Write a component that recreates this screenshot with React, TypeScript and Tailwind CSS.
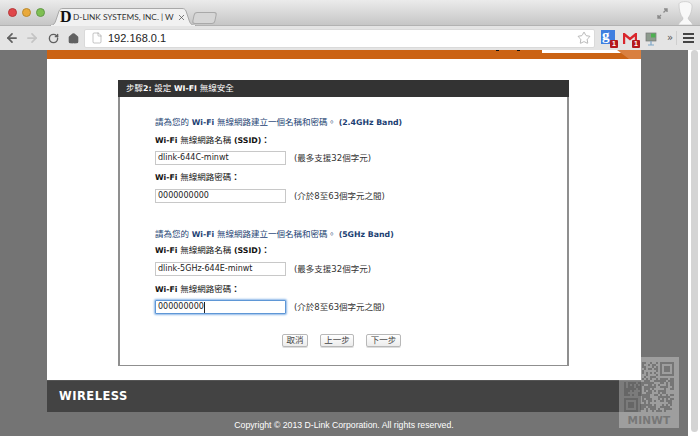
import { ArrowLeft, ArrowRight, RotateCw, Home, File, Star, X } from "lucide-react";

const CJK = "font-['DejaVu_Sans','Noto_Sans_CJK_TC',sans-serif]";

function Lights() {
  return (
    <div className="flex gap-[5px] pl-2 pt-2">
      <span className="w-[9px] h-[9px] rounded-full bg-[#e0474a] border border-[#b53a3a]" />
      <span className="w-[9px] h-[9px] rounded-full bg-[#e9a93a] border border-[#b98a30]" />
      <span className="w-[9px] h-[9px] rounded-full bg-[#7fbf52] border border-[#63994a]" />
    </div>
  );
}

function TabShape() {
  return (
    <svg width="146" height="18" className="absolute left-0 top-0" viewBox="0 0 146 18">
      <path d="M0 17.5 C4 17.5 5 15 6 12 L9 3 C10 1 11 .5 13 .5 L132 .5 C134 .5 135 1 136 3 L139 12 C140 15 141 17.5 146 17.5 Z" fill="#f1f1f1" stroke="#a8a8a8" />
      <rect x="1" y="17" width="144" height="1" fill="#f1f1f1" />
    </svg>
  );
}

function TabBar() {
  return (
    <div className="h-[25px] flex bg-gradient-to-b from-[#ebebeb] to-[#c6c6c6] relative">
      <Lights />
      <div className="relative w-[146px] h-[18px] mt-[8px] ml-[5px]">
        <TabShape />
        <div className="relative flex items-center h-[18px] pl-[10px]">
          <span className="font-['Liberation_Serif',serif] font-bold text-[16px] leading-none text-[#111] w-[12px]">D</span>
          <span className="font-['Lato','Liberation_Sans',sans-serif] text-[8.3px] text-[#333] w-[101px] ml-[1px] whitespace-nowrap">D-LINK SYSTEMS, INC. | W</span>
          <X size={9} strokeWidth={2} className="ml-[3px] text-[#555]" />
        </div>
      </div>
      <div className="w-[23px] h-[12px] mt-[12px] -ml-[3px] rounded-[3px] border border-[#a9a9a9] bg-[#d6d6d6] -skew-x-12" />
      <div className="ml-auto flex items-center gap-[10px] pr-[7px]">
        <svg width="11" height="11" viewBox="0 0 11 11" className="mt-[1px]">
          <path d="M1 10 L4 7 M6.5 4.5 L10 1 M7 1 H10 V4 M1 7 V10 H4" stroke="#8a8a8a" strokeWidth="1.4" fill="none" />
        </svg>
        <svg width="15" height="25" viewBox="0 0 15 25">
          <path d="M1 4 C1 1 14 0 14 6 C14 11 12 16 10 18 C11 21 13 21 15 25 L0 25 C2 21 5 21 5 18 C2 15 1 9 1 4Z" fill="#f8f8f8" stroke="#bdbdbd" strokeWidth=".6" />
        </svg>
      </div>
    </div>
  );
}

function Badge({ className = "" }: { className?: string }) {
  return (
    <span className={`absolute flex items-center justify-center w-[8px] h-[8px] rounded-[1px] bg-[#b5181d] text-white font-['Liberation_Sans',sans-serif] font-bold text-[7px] leading-none ${className}`}>1</span>
  );
}

function Toolbar() {
  return (
    <div className="h-[25px] bg-[#e4e4e4] border-t border-[#b2b2b2] flex items-center">
      <div className="flex items-center w-[84px] pl-[5px]">
        <ArrowLeft size={14} strokeWidth={3} className="text-[#606060]" />
        <ArrowRight size={14} strokeWidth={3} className="text-[#c4c4c4] ml-[6px]" />
        <RotateCw size={11} strokeWidth={3} className="text-[#606060] ml-[9px]" />
        <Home size={11} strokeWidth={3} fill="#606060" className="text-[#606060] ml-[9px]" />
      </div>
      <div className="w-[511px] h-[19px] bg-white rounded-[2px] flex items-center pl-[4px] pr-[3px] border border-[#dadada]">
        <File size={12} strokeWidth={1} className="text-[#888] ml-[2px]" />
        <span className="pl-[5px] font-['Liberation_Sans',sans-serif] text-[11px] text-[#222]">192.168.0.1</span>
        <Star size={14} strokeWidth={1.2} className="ml-auto text-[#9a9a9a]" />
      </div>
      <div className="flex items-center ml-[6px] h-[25px]">
        <div className="relative w-[22px] h-[25px]">
          <span className="absolute left-0 top-[4px] w-[14px] h-[14px] bg-[#3f7fe0] text-white font-['Liberation_Serif',serif] font-bold text-[15px] leading-[11px] pl-[1px]">g</span>
          <Badge className="left-[9px] top-[14px]" />
        </div>
        <div className="relative w-[22px] h-[25px]">
          <svg width="14" height="11" viewBox="0 0 14 11" className="absolute left-0 top-[7px]">
            <path d="M1 11 V1 L7 6 L13 1 V11" fill="none" stroke="#d9262c" strokeWidth="2.4" />
          </svg>
          <Badge className="left-[9px] top-[14px]" />
        </div>
        <svg width="12" height="14" viewBox="0 0 12 14" className="mt-[1px]">
          <rect x="1" y="1" width="10" height="8" fill="#8c9a8c" stroke="#777" strokeWidth=".7" />
          <rect x="6" y="1.5" width="4.5" height="4" fill="#4cb050" />
          <path d="M6 9 V13 M3 13 H9" stroke="#7fa7c8" strokeWidth="1.2" />
        </svg>
        <span className="ml-[10px] font-['DejaVu_Sans',sans-serif] text-[10px] text-[#555] leading-none">»</span>
        <span className="ml-[3px] w-px h-[14px] bg-[#cfcfcf]" />
        <div className="ml-[6px] flex flex-col gap-[2px]">
          <span className="block w-[11px] h-[2px] bg-[#444]" />
          <span className="block w-[11px] h-[2px] bg-[#444]" />
          <span className="block w-[11px] h-[2px] bg-[#444]" />
        </div>
      </div>
    </div>
  );
}

function Field({ value, hint, focused, caret }: { value: string; hint: string; focused?: boolean; caret?: boolean }) {
  return (
    <div className="flex items-center h-[14px]">
      <div className={`w-[131px] h-[14px] bg-white flex items-center pl-[2px] font-['DejaVu_Sans',sans-serif] text-[8px] text-[#222] whitespace-nowrap ${focused ? "border border-[#5f97d6] shadow-[0_0_2px_1px_#8db8e8] rounded-[1px]" : "border border-[#c8c8c8]"}`}>
        {value}
        {caret && <span className="w-px h-[11px] bg-[#222]" />}
      </div>
      <span className={`ml-[8px] ${CJK} text-[8.5px] text-[#333] whitespace-nowrap`}>{hint}</span>
    </div>
  );
}

function Bold({ children }: { children: string }) {
  return <b className="text-[7.8px] font-bold">{children}</b>;
}

function Label({ pre, text, post, className = "" }: { pre: string; text: string; post?: string; className?: string }) {
  return (
    <div className={`h-[12px] leading-[12px] ${CJK} text-[8.5px] text-[#111] whitespace-nowrap ${className}`}>
      <Bold>{pre}</Bold> {text}{post ? " " : ""}{post ? <Bold>{post}</Bold> : null}<b>：</b>
    </div>
  );
}

function Band({ band, ssid, hint2, pw, focused, mt }: { band: string; ssid: string; hint2: string; pw: string; focused?: boolean; mt: string }) {
  return (
    <div className={`flex flex-col ${mt}`}>
      <div className={`h-[12px] leading-[12px] ${CJK} text-[8.5px] text-[#1c3f73] whitespace-nowrap`}>
        請為您的 <Bold>Wi-Fi</Bold> 無線網路建立一個名稱和密碼。 <Bold>{band}</Bold>
      </div>
      <Label pre="Wi-Fi" text="無線網路名稱" post="(SSID)" className={focused ? "mt-[4px] mb-[6px]" : "mt-[6px] mb-[5px]"} />
      <Field value={ssid} hint="(最多支援32個字元)" />
      <Label pre="Wi-Fi" text="無線網路密碼" className={focused ? "mt-[7px] mb-[5px]" : "mt-[6px] mb-[6px]"} />
      <Field value={pw} hint={hint2} focused={focused} caret={focused} />
    </div>
  );
}

function Btn({ children, w }: { children: string; w: string }) {
  return (
    <button className={`${w} h-[13px] shrink-0 rounded-[2px] border border-[#b8b8b8] bg-gradient-to-b from-white to-[#ececec] ${CJK} text-[8.5px] leading-none text-[#444] shadow-[0_1px_0_#ddd]`}>
      {children}
    </button>
  );
}

function Card() {
  return (
    <div className="w-[451px] h-[286px] border-x-2 border-b border-[#8f8f8f] bg-white flex flex-col">
      <div className={`h-[17px] -mx-[2px] bg-[#333333] text-white ${CJK} text-[8.5px] leading-[17px] pl-[8px] whitespace-nowrap`}>
        步驟<Bold>2:</Bold> 設定 <Bold>WI-FI</Bold> 無線安全
      </div>
      <div className="pl-[35px] pt-[19px] flex flex-col">
        <Band mt="" band="(2.4GHz Band)" ssid="dlink-644C-minwt" hint2="(介於8至63個字元之間)" pw="0000000000" />
        <Band mt="mt-[25px]" band="(5GHz Band)" ssid="dlink-5GHz-644E-minwt" hint2="(介於8至63個字元之間)" pw="000000000" focused />
        <div className="flex gap-[12px] mt-[20px] pl-[127px]">
          <Btn w="w-[26px]">取消</Btn>
          <Btn w="w-[34px]">上一步</Btn>
          <Btn w="w-[35px]">下一步</Btn>
        </div>
      </div>
    </div>
  );
}

function Qr() {
  const cells: JSX.Element[] = [];
  const n = 25;
  const s = 2;
  let seed = 7;
  const rnd = () => {
    seed = (seed * 1103515245 + 12345) & 0x7fffffff;
    return (seed >> 12) % 100;
  };
  const inFinder = (x: number, y: number) =>
    (x >= n - 8 && y < 8) || (x < 8 && y >= n - 8) || (x < 8 && y < 8);
  for (let y = 0; y < n; y++) {
    for (let x = 0; x < n; x++) {
      const on = rnd() < 52;
      if (inFinder(x, y) || !on) continue;
      if (x < 9 && y < 10) continue;
      cells.push(<rect key={`${x}-${y}`} x={x * s} y={y * s} width={s} height={s} />);
    }
  }
  const finder = (x: number, y: number) => (
    <g key={`${x}${y}`}>
      <rect x={x + 1} y={y + 1} width="12" height="12" fill="none" strokeWidth="2" stroke="#555" strokeOpacity=".55" />
      <rect x={x + 4} y={y + 4} width="6" height="6" />
    </g>
  );
  return (
    <div className="absolute left-[619px] top-[357px] w-[60px] h-[71px] bg-white/30 flex flex-col items-center pt-[5px]">
      <svg width="50" height="50" viewBox="0 0 50 50" fill="#555" fillOpacity=".55">
        {cells}
        {finder(36, 0)}
        {finder(0, 36)}
      </svg>
      <span className="mt-[1px] font-['DejaVu_Sans',sans-serif] font-bold text-[10.5px] leading-[14px] tracking-[.2px] text-[#777]">MINWT</span>
    </div>
  );
}

export default function App() {
  return (
    <div className="relative w-[700px] h-[436px] overflow-hidden flex flex-col bg-[#747474]">
      <TabBar />
      <Toolbar />
      <div className="flex flex-1 min-h-0">
        <div className="flex-1 flex flex-col pl-[47px] pr-[47px] pb-0">
          <div className="w-[594px] h-[362px] bg-white flex flex-col">
            <div className="relative h-[9px] bg-[#cb6314] shrink-0">
              <span className="absolute left-[449px] top-0 w-[3px] h-[1px] bg-[#111]" />
              <span className="absolute left-[470px] top-0 w-[3px] h-[1px] bg-[#111]" />
              <span className="absolute left-[495px] top-0 w-[89px] h-[3px] bg-white" />
              <span className="absolute right-0 top-0 w-[24px] h-[9px] bg-[#d98040] [clip-path:polygon(0_0,100%_0,100%_100%,50%_100%)]" />
            </div>
            <div className="flex-1 pl-[71px] pt-[21px]">
              <Card />
            </div>
            <div className="h-[32px] bg-[#434343] border-t border-[#555] flex items-center pl-[12px] shrink-0 mt-auto">
              <span className="font-['DejaVu_Sans',sans-serif] font-bold text-[11.5px] tracking-[.5px] text-white leading-none">WIRELESS</span>
            </div>
          </div>
          <div className="w-[594px] text-center mt-[6px] font-['Liberation_Sans',sans-serif] text-[8.7px] leading-[14px] text-white whitespace-nowrap">
            Copyright © 2013 D-Link Corporation. All rights reserved.
          </div>
        </div>
        <div className="w-[12px] bg-white flex justify-center pt-0 shrink-0">
          <div className="w-[7px] h-[382px] bg-[#d4d4d4] rounded-full" />
        </div>
      </div>
      <Qr />
    </div>
  );
}
